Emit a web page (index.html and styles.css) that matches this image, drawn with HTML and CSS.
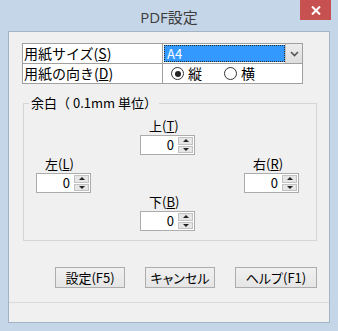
FILE: index.html
```html
<!DOCTYPE html>
<html lang="ja">
<head>
    <meta charset="UTF-8">
    <title>PDF設定</title>
    <link rel="stylesheet" href="styles.css">
</head>
<body>
    <div class="window">
        <!-- Title bar -->
        <div class="titlebar">
            <span class="title">PDF設定</span>
            <button class="close" title="閉じる">
                <svg width="10" height="9" viewBox="0 0 10 9">
                    <path d="M1 0.5 L9 8.5 M9 0.5 L1 8.5" stroke="#fff" stroke-width="2"/>
                </svg>
            </button>
        </div>

        <div class="client">
            <!-- Paper settings -->
            <div class="props">
                <div class="cell label">用紙サイズ(<u>S</u>)</div>
                <div class="cell select-cell">
                    <span class="selected">A4</span>
                    <span class="arrow">
                        <svg width="9" height="6" viewBox="0 0 9 6">
                            <path d="M1 1 L4.5 4.5 L8 1" fill="none" stroke="#555" stroke-width="1.6"/>
                        </svg>
                    </span>
                </div>
                <div class="cell label">用紙の向き(<u>D</u>)</div>
                <div class="cell radio-cell">
                    <label class="radio"><span class="dot checked"></span>縦</label>
                    <label class="radio second"><span class="dot"></span>横</label>
                </div>
            </div>

            <!-- Margins -->
            <fieldset class="margins">
                <legend>余白（ 0.1mm 単位）</legend>
                <div class="spin-grid">
                    <div class="field top">
                        <div class="lbl">上(<u>T</u>)</div>
                        <div class="spin"><span class="val">0</span><span class="btns"><i class="up"></i><i class="down"></i></span></div>
                    </div>
                    <div class="field left">
                        <div class="lbl">左(<u>L</u>)</div>
                        <div class="spin"><span class="val">0</span><span class="btns"><i class="up"></i><i class="down"></i></span></div>
                    </div>
                    <div class="field right">
                        <div class="lbl">右(<u>R</u>)</div>
                        <div class="spin"><span class="val">0</span><span class="btns"><i class="up"></i><i class="down"></i></span></div>
                    </div>
                    <div class="field bottom">
                        <div class="lbl">下(<u>B</u>)</div>
                        <div class="spin"><span class="val">0</span><span class="btns"><i class="up"></i><i class="down"></i></span></div>
                    </div>
                </div>
            </fieldset>

            <!-- Dialog buttons -->
            <div class="buttons">
                <button class="btn">設定(F5)</button>
                <button class="btn">キャンセル</button>
                <button class="btn wide">ヘルプ(F1)</button>
            </div>

            <div class="sep"></div>
        </div>
    </div>
</body>
</html>
```

FILE: styles.css
```css
/* General */
* {
    box-sizing: border-box;
}

body {
    margin: 0;
    font-family: "Noto Sans CJK JP", sans-serif;
    color: #000;
}

u {
    text-decoration: underline;
    text-underline-offset: 1px;
}

/* Window frame */
.window {
    width: 338px;
    height: 331px;
    background-color: #c5d6e8;
    display: flex;
    flex-direction: column;
}

.titlebar {
    height: 31px;
    display: grid;
    grid-template-columns: 1fr auto 1fr;
    align-items: start;
}

.title {
    grid-column: 2;
    font-family: "Open Sans", "Noto Sans CJK JP", sans-serif;
    font-size: 15px;
    line-height: 30px;
    padding-top: 2px;
    color: #3c3c3c;
}

.close {
    grid-column: 3;
    justify-self: end;
    margin-right: 7px;
    width: 31px;
    height: 20px;
    padding: 0;
    border: none;
    background-color: #c75050;
    display: flex;
    align-items: center;
    justify-content: center;
}

.client {
    flex: 1;
    margin: 0 8px 8px;
    background-color: #f0f0f0;
    border: 1px solid #a3b4c6;
    display: flex;
    flex-direction: column;
}

/* Paper settings table */
.props {
    margin: 11px 0 0 13px;
    width: 281px;
    display: grid;
    grid-template-columns: 139px 139px;
    grid-auto-rows: 19px;
    gap: 1px;
    padding: 1px;
    background-color: #a0a0a0;
}

.cell {
    background-color: #fff;
    font-size: 14px;
    line-height: 19px;
}

.label {
    padding-left: 1px;
    white-space: nowrap;
}

.select-cell {
    display: flex;
    padding: 1px 0 0 1px;
}

.selected {
    flex: 1;
    height: 17px;
    background-color: #3399ff;
    border: 1px dotted #2a2a2a;
    color: #fff;
    font-size: 13px;
    line-height: 15px;
    padding-left: 2px;
}

.arrow {
    width: 17px;
    margin-top: -1px;
    height: 19px;
    background: linear-gradient(#ececec, #dedede);
    border-left: 1px solid #c4c4c4;
    display: flex;
    align-items: center;
    justify-content: center;
}

.radio-cell {
    display: flex;
    align-items: center;
    padding-left: 8px;
}

.radio {
    display: flex;
    align-items: center;
    gap: 4px;
}

.radio.second {
    margin-left: 22px;
}

.dot {
    width: 13px;
    height: 13px;
    border: 1px solid #333;
    border-radius: 50%;
    background-color: #fff;
    display: flex;
    align-items: center;
    justify-content: center;
}

.dot.checked::after {
    content: "";
    width: 6px;
    height: 6px;
    border-radius: 50%;
    background-color: #222;
}

/* Margins group */
.margins {
    margin: 11px 0 0 14px;
    width: 294px;
    height: 146px;
    padding: 0;
    border: 1px solid #d5d5d5;
}

.margins legend {
    margin-left: 5px;
    padding: 0 2px;
    font-size: 13px;
    line-height: 16px;
}

.spin-grid {
    padding: 6px 0 0 12px;
    display: grid;
    grid-template-columns: 55px 55px 55px;
    grid-template-rows: repeat(3, 38px);
    column-gap: 49px;
}

.field.top { grid-column: 2; grid-row: 1; }
.field.left { grid-column: 1; grid-row: 2; }
.field.right { grid-column: 3; grid-row: 2; }
.field.bottom { grid-column: 2; grid-row: 3; }

.lbl {
    height: 18px;
    padding-left: 9px;
    font-size: 13px;
    line-height: 18px;
    white-space: nowrap;
}

.spin {
    height: 20px;
    border: 1px solid #acacac;
    background-color: #fff;
    display: flex;
}

.val {
    flex: 1;
    text-align: right;
    padding-right: 4px;
    font-size: 13px;
    line-height: 18px;
}

.btns {
    width: 15px;
    margin: 1px 1px 1px 0;
    display: flex;
    flex-direction: column;
    gap: 1px;
}

.btns i {
    flex: 1;
    background-color: #e6e6e6;
    border: 1px solid #c2c2c2;
    display: flex;
    align-items: center;
    justify-content: center;
}

.btns i::after {
    content: "";
    border-left: 3px solid transparent;
    border-right: 3px solid transparent;
}

.btns .up::after {
    border-bottom: 3px solid #222;
}

.btns .down::after {
    border-top: 3px solid #222;
}

/* Buttons */
.buttons {
    margin: 26px 0 0 46px;
    display: flex;
    gap: 20px;
}

.btn {
    width: 70px;
    height: 21px;
    padding: 0;
    border: 1px solid #acacac;
    background: linear-gradient(#f0f0f0, #e5e5e5);
    font-family: "Noto Sans CJK JP", sans-serif;
    font-size: 13px;
    line-height: 19px;
    font-feature-settings: "palt";
    color: #000;
}

.btn.wide {
    width: 82px;
}

/* Bottom separator */
.sep {
    margin-top: 14px;
    border-top: 1px solid #dadada;
}
```
